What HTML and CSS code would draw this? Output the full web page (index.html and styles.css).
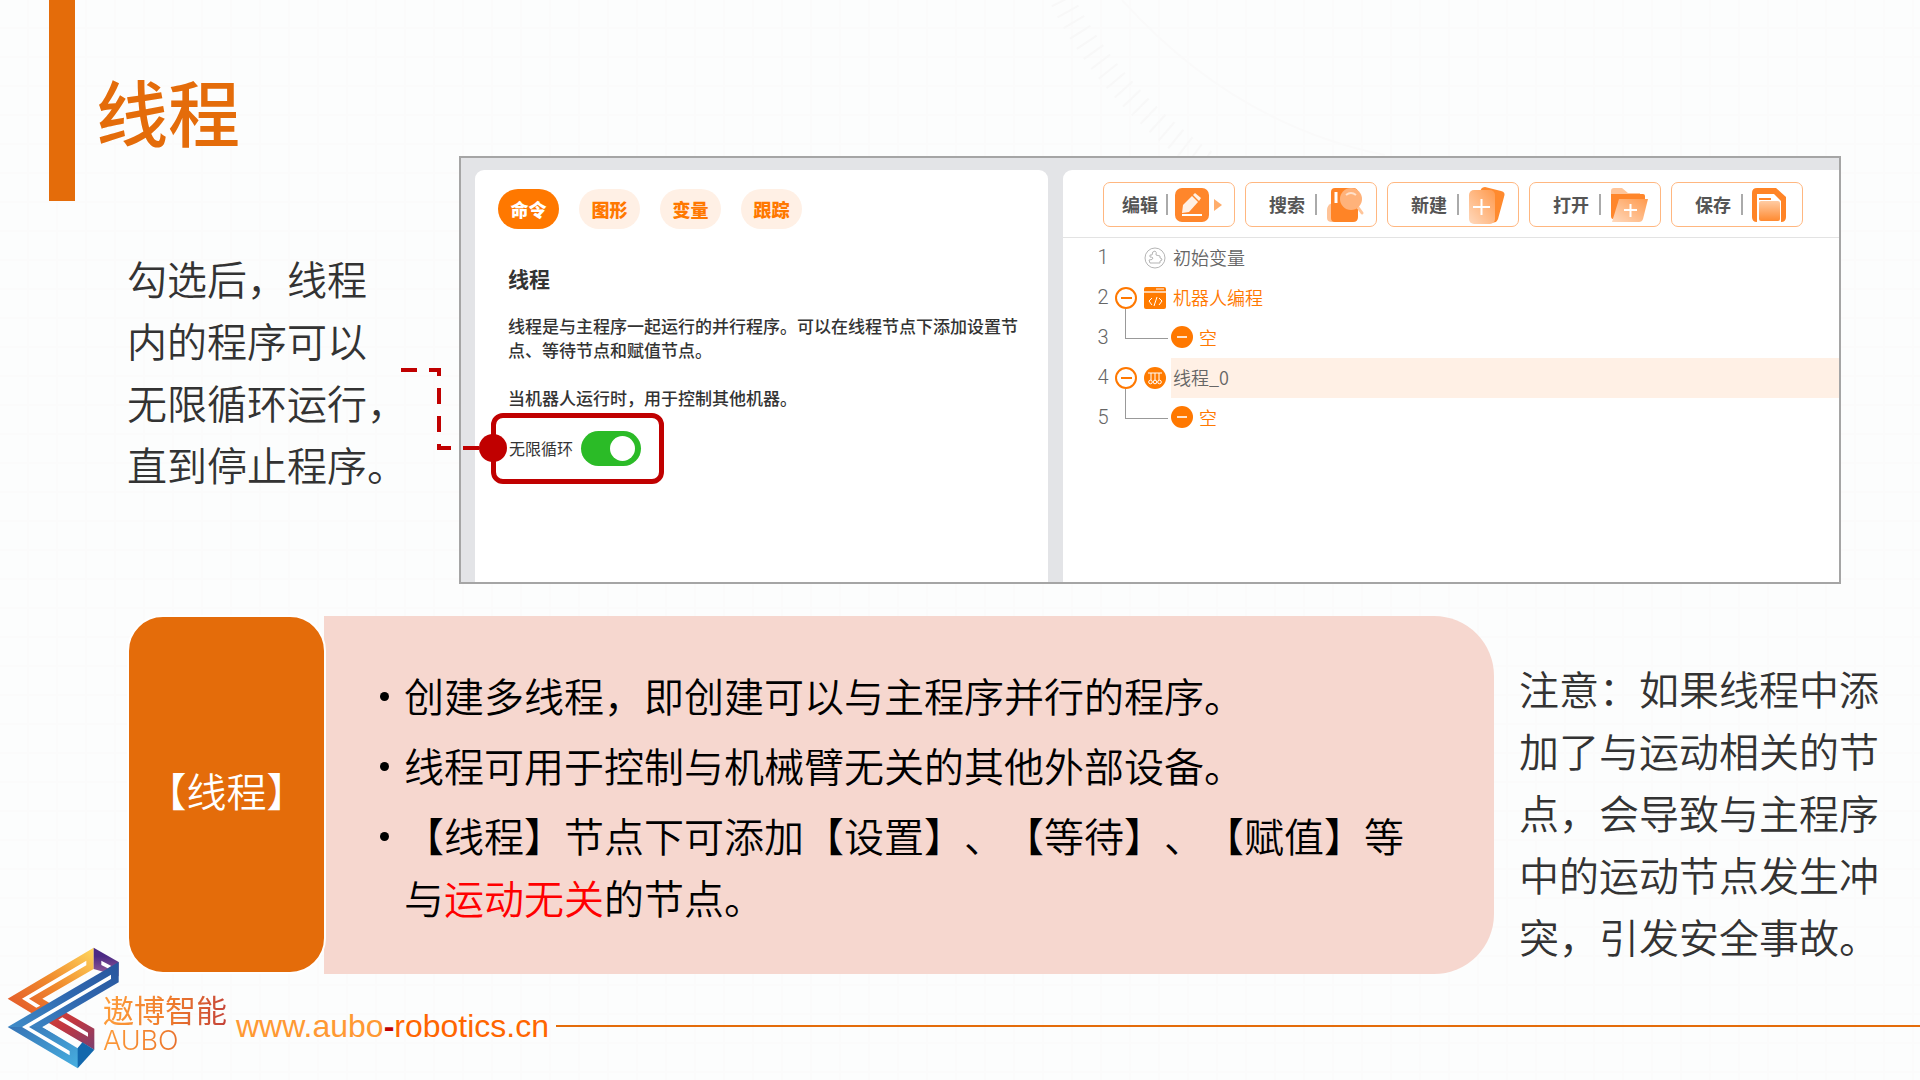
FILE: index.html
```html
<!DOCTYPE html>
<html lang="zh-CN">
<head>
    <meta charset="UTF-8">
    <meta name="viewport" content="width=device-width, initial-scale=1.0">
    <title>线程 - 遨博智能</title>
    <link rel="stylesheet" href="styles.css">
</head>
<body>
    <svg class="backdrop" width="420" height="160" viewBox="0 0 420 160" fill="none" aria-hidden="true">
        <path d="M27 0Q75 95 175 165" stroke="#f8f8f8" stroke-width="24" stroke-dasharray="2 10"/>
        <path d="M87 0Q200 125 350 155" stroke="#fafafa" stroke-width="2"/>
    </svg>

    <main>
        <section class="top">
            <div class="intro">
                <header class="title">
                    <h1>线程</h1>
                </header>
                <p class="note">勾选后，线程<br>内的程序可以<br>无限循环运行，<br>直到停止程序。</p>
            </div>

            <div class="panel">
                <div class="card command">
                    <div class="tabs">
                        <button class="tab active">命令</button>
                        <button class="tab">图形</button>
                        <button class="tab">变量</button>
                        <button class="tab">跟踪</button>
                    </div>
                    <div class="description">
                        <h2>线程</h2>
                        <p>线程是与主程序一起运行的并行程序。可以在线程节点下添加设置节点、等待节点和赋值节点。</p>
                        <p>当机器人运行时，用于控制其他机器。</p>
                    </div>
                    <div class="loop">
                        <label for="loop-toggle">无限循环</label>
                        <input type="checkbox" id="loop-toggle" checked>
                        <svg class="connector" width="108" height="96" viewBox="0 0 108 96" fill="none" aria-hidden="true">
                            <path d="M0 3H38V81H92" stroke="#c00000" stroke-width="4" stroke-dasharray="16 12"/>
                            <circle cx="92" cy="81" r="14" fill="#c00000"/>
                        </svg>
                    </div>
                </div>

                <div class="card program">
                    <div class="toolbar">
                        <button class="tool edit">
                            <span>编辑</span>
                            <svg width="34" height="34" viewBox="0 0 34 34">
                                <defs>
                                    <linearGradient id="fade" x1="1" y1="0" x2="0" y2="1">
                                        <stop offset="0" stop-color="#ff9a4d"/>
                                        <stop offset="1" stop-color="#ffd9bd"/>
                                    </linearGradient>
                                    <linearGradient id="fill" x1="0" y1="0" x2="0" y2="1">
                                        <stop offset="0" stop-color="#ffcba3"/>
                                        <stop offset="1" stop-color="#ff8a30"/>
                                    </linearGradient>
                                </defs>
                                <rect width="34" height="34" rx="7" fill="#ff862b"/>
                                <path d="M7 25L8 17L17 8L23 14L14 24Z" fill="#fff0e4"/>
                                <path d="M18 7L20 5L26 10L24 13Z" fill="#fff0e4"/>
                                <path d="M7 27H27" stroke="#fff" stroke-width="2"/>
                            </svg>
                            <i class="arrow"></i>
                        </button>
                        <button class="tool">
                            <span>搜索</span>
                            <svg width="38" height="36" viewBox="0 0 38 36">
                                <path d="M6 16Q1 18 1 23V31Q1 35 6 35H12Z" fill="#ffc397"/>
                                <path d="M9 1H27Q32 1 32 6V30Q32 35 27 35H9Q5 35 5 31V5Q5 1 9 1Z" fill="#ff8426"/>
                                <path d="M10 5V16" stroke="#fff" stroke-width="3"/>
                                <path d="M31 19L36 26" stroke="#ffc59a" stroke-width="3" stroke-linecap="round"/>
                                <circle cx="25" cy="12" r="11" fill="#ffb27a"/>
                                <path d="M20 8Q25 4 30 8" fill="none" stroke="#fff" opacity=".6" stroke-width="2"/>
                            </svg>
                        </button>
                        <button class="tool">
                            <span>新建</span>
                            <svg width="38" height="38" viewBox="0 0 38 38">
                                <path d="M17 1L33 5Q38 6 36 11L30 33Q28 38 23 36L12 8Q12 1 17 1Z" fill="#ff8a2e"/>
                                <rect x="1" y="4" width="26" height="34" rx="5" fill="url(#fade)"/>
                                <path d="M5 21H22M13.500 13V29" stroke="#fff" stroke-width="2"/>
                            </svg>
                        </button>
                        <button class="tool">
                            <span>打开</span>
                            <svg width="38" height="34" viewBox="0 0 38 34">
                                <path d="M1 3Q1 0 4 0H12L18 5H30V12H1Z" fill="#ffc59a"/>
                                <path d="M1 6H33Q35 6 35 8V22L3 31Q1 31 1 28Z" fill="#ff862b"/>
                                <path d="M9 11H38L33 31Q32 34 29 34H2Z" fill="url(#fade)"/>
                                <path d="M14 22H27M20.500 16V29" stroke="#fff" stroke-width="2"/>
                            </svg>
                        </button>
                        <button class="tool">
                            <span>保存</span>
                            <svg width="38" height="34" viewBox="0 0 38 34">
                                <path d="M5 0H24L34 9V29Q34 34 29 34H5Q0 34 0 29V5Q0 0 5 0Z" fill="#ff8426"/>
                                <path d="M5 34V6H22L29 13V34Z" fill="#fff"/>
                                <path d="M7 11H19" stroke="#ff8426" stroke-width="2"/>
                                <rect x="7" y="13" width="21" height="20" rx="2" fill="url(#fill)"/>
                            </svg>
                        </button>
                    </div>

                    <ol class="tree">
                        <li>
                            <span class="number">1</span>
                            <span></span>
                            <svg width="22" height="22" viewBox="0 0 22 22" fill="none" stroke="#b5b5b5">
                                <circle cx="11" cy="11" r="10"/>
                                <path d="M6 8H8Q8 4 11 4Q13 5 12 8L16 9V11Q18 11 18 13L16 14V16H6L5 13Q9 13 9 11Q8 10 6 10Z"/>
                            </svg>
                            <span class="label">初始变量</span>
                        </li>
                        <li class="orange">
                            <span class="number">2</span>
                            <button class="fold" aria-label="收起"></button>
                            <svg width="22" height="22" viewBox="0 0 22 22">
                                <rect width="22" height="22" rx="2" fill="#ff7b00"/>
                                <path d="M0 5H22" stroke="#ffd0a6" stroke-width="2"/>
                                <path d="M12 2H20" stroke="#ffb77a" stroke-width="2"/>
                                <path d="M8 11L5 14L8 18M13 10L10 19M15 11L18 14L15 18" fill="none" stroke="#fff"/>
                            </svg>
                            <span class="label">机器人编程</span>
                        </li>
                        <li class="orange child">
                            <span class="number">3</span>
                            <span class="branch"></span>
                            <span class="label"><i class="empty"></i>空</span>
                        </li>
                        <li class="selected">
                            <span class="number">4</span>
                            <button class="fold" aria-label="收起"></button>
                            <svg width="22" height="22" viewBox="0 0 22 22" fill="none" stroke="#fff">
                                <circle cx="11" cy="11" r="11" fill="#ff7b00" stroke="none"/>
                                <path d="M4 6H18M7 6V13M11 6V13M15 6V13"/>
                                <circle cx="6.500" cy="15" r="1.800"/>
                                <circle cx="11" cy="15" r="1.800"/>
                                <circle cx="15.500" cy="15" r="1.800"/>
                            </svg>
                            <span class="label">线程_0</span>
                        </li>
                        <li class="orange child">
                            <span class="number">5</span>
                            <span class="branch"></span>
                            <span class="label"><i class="empty"></i>空</span>
                        </li>
                    </ol>
                </div>
            </div>
        </section>

        <section class="summary">
            <h2 class="summary-name">【线程】</h2>
            <ul class="summary-list">
                <li><span>创建多线程，即创建可以与主程序并行的程序。</span></li>
                <li><span>线程可用于控制与机械臂无关的其他外部设备。</span></li>
                <li><span>【线程】节点下可添加【设置】、【等待】、【赋值】等<br>与<em>运动无关</em>的节点。</span></li>
            </ul>
            <p class="note warning">注意：如果线程中添加了与运动相关的节点，会导致与主程序中的运动节点发生冲突，引发安全事故。</p>
        </section>
    </main>

    <footer>
        <svg class="logo" width="113" height="122" viewBox="20 22 339 366" aria-hidden="true">
            <defs>
                <linearGradient id="gold" x1="1" y1="0" x2="0" y2="1">
                    <stop offset="0" stop-color="#ffd75e"/>
                    <stop offset=".5" stop-color="#f08a2c"/>
                    <stop offset="1" stop-color="#e2552b"/>
                </linearGradient>
                <linearGradient id="red" x1="0" y1="0" x2="1" y2="1">
                    <stop offset="0" stop-color="#e8602c"/>
                    <stop offset=".6" stop-color="#c2363f"/>
                    <stop offset="1" stop-color="#7c4070"/>
                </linearGradient>
                <linearGradient id="purple" x1="0" y1="0" x2="0" y2="1">
                    <stop offset=".3" stop-color="#4c2a85"/>
                    <stop offset="1" stop-color="#a0629a"/>
                </linearGradient>
                <linearGradient id="blue" x1="1" y1="0" x2="0" y2="1">
                    <stop offset="0" stop-color="#28559d"/>
                    <stop offset=".5" stop-color="#3069b0"/>
                    <stop offset="1" stop-color="#3f8cc8"/>
                </linearGradient>
                <linearGradient id="sky" x1="0" y1="0" x2="1" y2="1">
                    <stop offset="0" stop-color="#3673b5"/>
                    <stop offset="1" stop-color="#48b2e2"/>
                </linearGradient>
            </defs>
            <path d="M22 177L94 220L152 193L282 267V330L98 222Z" fill="url(#red)"/>
            <path d="M280 24L22 177L94 221L154 194L126 177L280 88Z" fill="url(#gold)"/>
            <path d="M258 63V77L86 177L120 198L108 204L65 177Z" fill="#fff"/>
            <path d="M186 233L263 279V291L174 240Z" fill="#fff"/>
            <path d="M280 24L355 67V110L280 88Z" fill="url(#purple)"/>
            <path d="M303 63L333 79L322 86L303 76Z" fill="#fff"/>
            <path d="M22 262L126 262L248 330L232 386Z" fill="url(#sky)"/>
            <path d="M355 67V128L126 262L86 262L22 262Z" fill="url(#blue)"/>
            <path d="M126 262L232 326L246 312L160 260Z" fill="#fcfdfd"/>
            <path d="M332 105V118L86 262L208 334V347L65 262Z" fill="#fff"/>
            <path d="M232 325L246 308L282 330L232 386Z" fill="#1268ad"/>
        </svg>
        <div class="brand">
            <strong>遨博智能</strong>
            <span>AUBO</span>
        </div>
        <a class="site" href="#">www.aubo<b>-</b><span>robotics.cn</span></a>
        <hr>
    </footer>
</body>
</html>
```

FILE: styles.css
```css
:root {
    --primary: #e46c0a;
    --bright: #ff7800;
    --peach: #fff0e5;
    --alert: #c00000;
}

* {
    margin: 0;
    padding: 0;
    box-sizing: border-box;
}

body {
    font-family: "Noto Sans CJK SC", sans-serif;
    font-weight: 350;
    text-spacing-trim: space-all;
    color: #333;
    min-height: 100vh;
    overflow-x: hidden;
    background:
        repeating-linear-gradient(90deg, transparent 0 27px, #fbfbfb 27px 29px),
        repeating-linear-gradient(transparent 0 27px, #fbfbfb 27px 29px),
        #fcfdfd;
}

button {
    font-family: inherit;
    cursor: pointer;
}

.backdrop {
    position: absolute;
    top: 0;
    left: 1035px;
    z-index: -1;
}

.top {
    display: flex;
    padding-right: 79px;
}

.intro {
    flex: 0 0 459px;
}

.title {
    display: flex;
    margin-left: 49px;
    height: 201px;
    padding: 56px 0 0 21px;
    border-left: 26px solid var(--primary);
}

.title h1 {
    font-size: 72px;
    line-height: 108px;
    font-weight: 500;
    color: var(--primary);
}

.note {
    font-size: 40px;
    line-height: 62px;
}

.intro .note {
    margin: 46px 0 0 127px;
    white-space: nowrap;
}

/* software screen */
.panel {
    flex: 1;
    display: flex;
    gap: 15px;
    min-height: 428px;
    margin-top: 156px;
    padding: 12px 0 0 14px;
    border: 2px solid #a5a5a5;
    background: #e3e4e7;
}

.card {
    background: #fff;
}

.command {
    flex: 0 0 573px;
    padding-top: 19px;
    border-radius: 9px 9px 0 0;
}

.tabs {
    display: flex;
    gap: 20px;
    padding: 0 23px;
}

.tab {
    width: 61px;
    height: 40px;
    padding-bottom: 1px;
    border: none;
    border-radius: 20px;
    background: var(--peach);
    color: var(--bright);
    font-size: 18px;
    font-weight: 900;
}

.tab.active {
    background: var(--bright);
    color: #fff;
}

.description {
    padding: 34px 20px 0 33px;
    font-size: 17px;
    line-height: 24px;
    font-weight: 500;
}

.description h2 {
    margin-bottom: 21px;
    font-size: 21px;
    line-height: 30px;
    font-weight: 700;
}

.description p + p {
    margin-top: 24px;
}

.loop {
    position: relative;
    display: flex;
    align-items: center;
    gap: 8px;
    width: 173px;
    height: 71px;
    margin: 3px 0 0 16px;
    padding-left: 13px;
    border: 5px solid var(--alert);
    border-radius: 12px;
    font-size: 16px;
    font-weight: 400;
}

.loop label {
    padding-bottom: 2px;
}

.loop input {
    appearance: none;
    display: flex;
    align-items: center;
    justify-content: flex-end;
    width: 60px;
    height: 35px;
    padding-right: 6px;
    border-radius: 18px;
    background: #2bbb27;
    cursor: pointer;
}

.loop input::before {
    content: '';
    width: 25px;
    height: 25px;
    border-radius: 50%;
    background: #fff;
}

.loop input:not(:checked) {
    justify-content: flex-start;
    padding-left: 6px;
    background: #bbb;
}

.connector {
    position: absolute;
    right: 150px;
    bottom: 16px;
}

.program {
    flex: 1;
    border-radius: 9px 0 0 0;
}

.toolbar {
    display: flex;
    gap: 10px;
    padding: 12px 0 10px 40px;
    border-bottom: 1px solid #e3e3e3;
}

.tool {
    display: flex;
    align-items: center;
    justify-content: flex-end;
    width: 132px;
    height: 45px;
    padding-right: 12px;
    border: 1px solid #ffb780;
    border-radius: 7px;
    background: #fff;
    color: #555;
    font-size: 18px;
    font-weight: 700;
}

.tool span {
    display: flex;
    align-items: center;
    gap: 10px;
    margin-right: 9px;
    padding-bottom: 1px;
}

.tool.edit span {
    gap: 8px;
    margin-right: 7px;
}

.tool span::after {
    content: '';
    width: 2px;
    height: 21px;
    background: #aaa;
}

.arrow {
    margin-left: 5px;
    border: 6px solid transparent;
    border-left: 8px solid #ffad6b;
    border-right: none;
}

.tree {
    list-style: none;
    font-size: 18px;
    color: #666;
}

.tree li {
    display: grid;
    grid-template-columns: 23px 29px 27px 1fr;
    align-items: center;
    height: 40px;
    padding-left: 29px;
}

.tree .number {
    width: 22px;
    padding-bottom: 2px;
    text-align: center;
    font-family: Roboto, sans-serif;
    font-size: 20px;
}

.fold {
    display: grid;
    place-items: center;
    width: 22px;
    height: 22px;
    border: 2px solid var(--bright);
    border-radius: 50%;
    background: #fff;
}

.fold::before {
    content: '';
    width: 11px;
    height: 2px;
    background: var(--bright);
}

.label {
    display: flex;
    align-items: center;
    gap: 6px;
    height: 40px;
    padding: 0 0 2px 2px;
}

.child .label {
    padding-left: 0;
}

.orange .label {
    color: var(--bright);
}

.selected .label {
    background: var(--peach);
}

.branch {
    grid-column: 2 / 4;
    position: relative;
    height: 40px;
}

.branch::before {
    content: '';
    position: absolute;
    top: -9px;
    left: 10px;
    width: 42px;
    height: 29px;
    border-left: 1px solid #999;
    border-bottom: 1px solid #999;
}

.empty {
    display: grid;
    place-items: center;
    width: 22px;
    height: 22px;
    border-radius: 50%;
    background: var(--bright);
}

.empty::before {
    content: '';
    width: 10px;
    height: 2px;
    background: #ffe3cc;
}

/* summary band */
.summary {
    display: flex;
    min-height: 358px;
    margin-top: 32px;
    padding: 0 26px 0 127px;
}

.summary-name {
    flex: 0 0 199px;
    display: grid;
    place-items: center;
    margin: -1px -2px 0 0;
    padding-bottom: 10px;
    border: 2px solid #fff;
    border-radius: 36px;
    background: var(--primary);
    color: #fff;
    font-size: 40px;
    font-weight: 350;
    z-index: 1;
}

.summary-list {
    flex: 1;
    display: flex;
    flex-direction: column;
    gap: 8px;
    padding: 48px 0 44px 56px;
    border-radius: 0 60px 60px 0;
    background: #f6d7cf;
    color: #000;
    font-size: 40px;
    line-height: 62px;
    list-style: none;
}

.summary-list li {
    display: flex;
    gap: 15px;
}

.summary-list li::before {
    content: '';
    width: 9px;
    height: 9px;
    margin-top: 28px;
    border-radius: 50%;
    background: #000;
}

.summary-list em {
    font-style: normal;
    color: #f00;
}

.warning {
    flex: 0 0 375px;
    margin-left: 25px;
    padding-top: 41px;
}

footer {
    display: flex;
    align-items: flex-end;
    margin-top: -27px;
    padding-left: 7px;
}

.brand {
    display: flex;
    flex-direction: column;
    width: 133px;
    margin: 0 0 12px -17px;
    background: linear-gradient(100deg, #ff9f3a, #ee7a2c 50%, #b8323c);
    background-clip: text;
    color: transparent;
}

.brand strong {
    font-size: 31px;
    line-height: 32px;
    font-weight: 400;
}

.brand span {
    font-family: Inter, sans-serif;
    font-size: 27px;
    line-height: 32px;
}

.site {
    margin-bottom: 25px;
    font: 32px/36px "Liberation Sans", sans-serif;
    color: #f93;
    text-decoration: none;
}

.site b {
    color: var(--alert);
}

.site span {
    color: #f60;
}

hr {
    flex: 1;
    height: 2px;
    margin: 0 0 42px 7px;
    border: none;
    background: var(--primary);
}
```
